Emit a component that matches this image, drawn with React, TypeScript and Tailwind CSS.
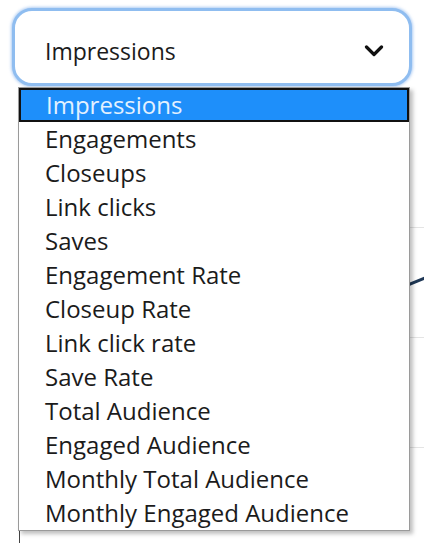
const options = [
  "Impressions",
  "Engagements",
  "Closeups",
  "Link clicks",
  "Saves",
  "Engagement Rate",
  "Closeup Rate",
  "Link click rate",
  "Save Rate",
  "Total Audience",
  "Engaged Audience",
  "Monthly Total Audience",
  "Monthly Engaged Audience",
];

const font = { fontFamily: '"Open Sans", "Noto Sans", sans-serif' };

function Chevron() {
  return (
    <svg width="20" height="12" viewBox="0 0 20 12" fill="none" aria-hidden>
      <polyline points="2.5,2 10,9.5 17.5,2" stroke="#111" strokeWidth="3.2" strokeLinecap="round" strokeLinejoin="round" />
    </svg>
  );
}

export default function App() {
  return (
    <div className="relative h-[543px] w-[424px] overflow-hidden bg-white" style={font}>
      <div className="px-[12px] pt-[8px]">
        <div className="flex h-[78px] items-center justify-between rounded-[20px] border-[3px] border-[#8fbdf0] bg-white pl-[30px] pr-[25px] pt-[8px] shadow-[0_0_3px_1px_rgba(120,170,235,0.6)]">
          <span className="text-[23px] leading-none text-[#1b1b1b]">Impressions</span>
          <Chevron />
        </div>
      </div>

      {/* chart behind the open list */}
      <div className="relative ml-[19px] mt-[32px] border-l border-[#444]">
        <div className="h-[110px] border-b border-[#e4e4e4]" />
        <div className="h-[110px] border-b border-[#e4e4e4]" />
        <div className="h-[110px] border-b border-[#e4e4e4]" />
        <div className="h-[110px] border-b border-[#e4e4e4]" />
        <svg className="absolute left-0 top-0" width="405" height="440" aria-hidden>
          <polyline points="300,230 390,166 405,160" stroke="#1f3856" strokeWidth="3" fill="none" />
        </svg>
      </div>

      <ul className="absolute left-[18px] top-[87px] w-[392px] border border-[#9a9a9a] bg-white shadow-[3px_3px_4px_rgba(0,0,0,0.25)]">
        {options.map((o, i) => (
          <li
            key={o}
            className={
              i === 0
                ? "flex h-[34px] items-center border-2 border-[#111] bg-[#1e8ffa] pl-[25px] text-[24px] leading-none text-[#e3f1ff]"
                : "flex h-[34px] items-center pl-[26px] text-[24px] leading-none text-[#1b1b1b]"
            }
          >
            {o}
          </li>
        ))}
      </ul>
    </div>
  );
}
